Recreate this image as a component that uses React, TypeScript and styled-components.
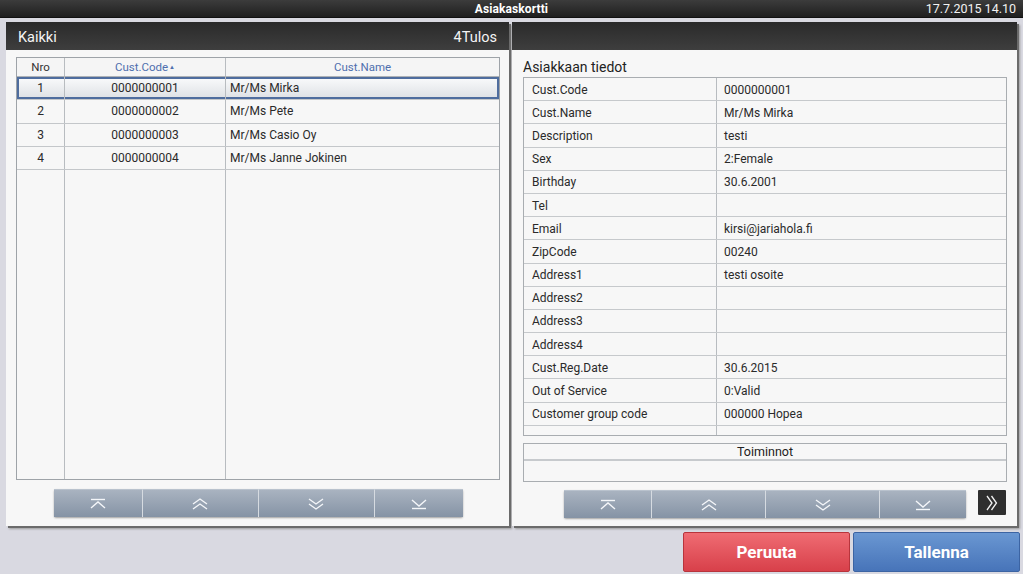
import styled, { createGlobalStyle } from 'styled-components';

const customers = [
  { nro: 1, code: '0000000001', name: 'Mr/Ms Mirka' },
  { nro: 2, code: '0000000002', name: 'Mr/Ms Pete' },
  { nro: 3, code: '0000000003', name: 'Mr/Ms Casio Oy' },
  { nro: 4, code: '0000000004', name: 'Mr/Ms Janne Jokinen' },
];

const details: [string, string][] = [
  ['Cust.Code', '0000000001'],
  ['Cust.Name', 'Mr/Ms Mirka'],
  ['Description', 'testi'],
  ['Sex', '2:Female'],
  ['Birthday', '30.6.2001'],
  ['Tel', ''],
  ['Email', 'kirsi@jariahola.fi'],
  ['ZipCode', '00240'],
  ['Address1', 'testi osoite'],
  ['Address2', ''],
  ['Address3', ''],
  ['Address4', ''],
  ['Cust.Reg.Date', '30.6.2015'],
  ['Out of Service', '0:Valid'],
  ['Customer group code', '000000 Hopea'],
];

function PagerIcon({ kind }: { kind: 'first' | 'up' | 'down' | 'last' }) {
  const stroke = '#f4f6f9';
  return (
    <svg width="18" height="14" viewBox="0 0 18 14" fill="none" stroke={stroke} strokeWidth="1.4">
      {kind === 'first' && (
        <>
          <path d="M2 2.5h14" />
          <path d="M2 11l7-6 7 6" />
        </>
      )}
      {kind === 'up' && (
        <>
          <path d="M2 7l7-5 7 5" />
          <path d="M2 12l7-5 7 5" />
        </>
      )}
      {kind === 'down' && (
        <>
          <path d="M2 2l7 5 7-5" />
          <path d="M2 7l7 5 7-5" />
        </>
      )}
      {kind === 'last' && (
        <>
          <path d="M2 3l7 6 7-6" />
          <path d="M2 11.5h14" />
        </>
      )}
    </svg>
  );
}

function Pager({ widths }: { widths: number[] }) {
  const kinds = ['first', 'up', 'down', 'last'] as const;
  return (
    <PagerGroup>
      {kinds.map((k, i) => (
        <PagerButton key={k} $w={widths[i]}>
          <PagerIcon kind={k} />
        </PagerButton>
      ))}
    </PagerGroup>
  );
}

export default function App() {
  return (
    <>
      <GlobalStyle />
      <Screen>
        <TopBar>
          <TopTitle>Asiakaskortti</TopTitle>
          <TopTime>17.7.2015 14.10</TopTime>
        </TopBar>
        <Main>
          <Panel $w={503}>
            <PanelHeader>
              <span>Kaikki</span>
              <span>4Tulos</span>
            </PanelHeader>
            <PanelBody>
              <ListTable>
                <ListHead>
                  <HeadCell $w={47}>Nro</HeadCell>
                  <HeadCell $w={161} $blue>
                    Cust.Code<SortMark>▲</SortMark>
                  </HeadCell>
                  <HeadCell $blue $grow>
                    Cust.Name
                  </HeadCell>
                </ListHead>
                {customers.map((c, i) => (
                  <ListRow key={c.nro} $selected={i === 0}>
                    <ListCell $w={47} $center>
                      {c.nro}
                    </ListCell>
                    <ListCell $w={161} $center>
                      {c.code}
                    </ListCell>
                    <ListCell $grow>{c.name}</ListCell>
                  </ListRow>
                ))}
                <ListFiller>
                  <FillerCol $w={47} />
                  <FillerCol $w={161} />
                  <FillerCol $grow />
                </ListFiller>
              </ListTable>
              <PagerRow>
                <Pager widths={[88, 116, 116, 89]} />
              </PagerRow>
            </PanelBody>
          </Panel>
          <Panel $w={505}>
            <PanelHeader />
            <PanelBody $right>
              <SectionTitle>Asiakkaan tiedot</SectionTitle>
              <DetailTable>
                {details.map(([k, v]) => (
                  <DetailRow key={k}>
                    <DetailKey>{k}</DetailKey>
                    <DetailValue>{v}</DetailValue>
                  </DetailRow>
                ))}
                <DetailRow $short>
                  <DetailKey />
                  <DetailValue />
                </DetailRow>
              </DetailTable>
              <ActionsBox>
                <ActionsHead>Toiminnot</ActionsHead>
              </ActionsBox>
              <PagerRow $right>
                <Pager widths={[87, 114, 114, 87]} />
                <NextButton>
                  <svg width="14" height="18" viewBox="0 0 14 18" fill="none" stroke="#f2f2f2" strokeWidth="1.3">
                    <path d="M2 2l5 7-5 7" />
                    <path d="M6.5 2l5 7-5 7" />
                  </svg>
                </NextButton>
              </PagerRow>
            </PanelBody>
          </Panel>
        </Main>
        <BottomBar>
          <ActionButton $tone="red">Peruuta</ActionButton>
          <ActionButton $tone="blue">Tallenna</ActionButton>
        </BottomBar>
      </Screen>
    </>
  );
}

const GlobalStyle = createGlobalStyle`
  html, body {
    margin: 0;
    padding: 0;
    background: #d9d9e1;
  }
  * {
    box-sizing: border-box;
  }
  body {
    font-family: Roboto, "Noto Sans", "Liberation Sans", sans-serif;
    color: #222;
  }
`;

const Screen = styled.div`
  width: 1023px;
  height: 574px;
  display: flex;
  flex-direction: column;
  background: #d9d9e1;
  overflow: hidden;
`;

const TopBar = styled.div`
  position: relative;
  height: 18px;
  flex-shrink: 0;
  display: flex;
  align-items: center;
  justify-content: center;
  background: linear-gradient(#3c3c3c, #1f1f1f);
  border-bottom: 1px solid #111;
  color: #fff;
  font-size: 12px;
`;

const TopTitle = styled.span`
  font-weight: 700;
  letter-spacing: 0.1px;
`;

const TopTime = styled.span`
  position: absolute;
  right: 7px;
  top: 1px;
  font-size: 12.5px;
  color: #f2f2f2;
`;

const Main = styled.div`
  display: flex;
  gap: 3px;
  padding: 4px 0 0 6px;
  height: 508px;
  flex-shrink: 0;
`;

const Panel = styled.div<{ $w: number }>`
  width: ${(p) => p.$w}px;
  height: 504px;
  display: flex;
  flex-direction: column;
  background: #f7f7f7;
  box-shadow: 2px 2px 0 #6b6b6b, 3px 3px 2px #9a9a9a;
`;

const PanelHeader = styled.div`
  height: 28px;
  flex-shrink: 0;
  display: flex;
  align-items: center;
  justify-content: space-between;
  padding: 2px 12px 0 12px;
  background: linear-gradient(#2a2a2a, #3e3e3e);
  color: #f4f4f4;
  font-size: 14.5px;
`;

const PanelBody = styled.div<{ $right?: boolean }>`
  flex: 1;
  display: flex;
  flex-direction: column;
  padding: ${(p) => (p.$right ? '8px 10px 0 11px' : '7px 9px 0 10px')};
`;

const ListTable = styled.div`
  height: 423px;
  display: flex;
  flex-direction: column;
  border: 1px solid #9ea3a8;
  background: #f7f7f7;
`;

const ListHead = styled.div`
  height: 19px;
  flex-shrink: 0;
  display: flex;
  border-bottom: 1px solid #aeb2b6;
  background: #f5f5f5;
`;

const HeadCell = styled.div<{ $w?: number; $blue?: boolean; $grow?: boolean }>`
  width: ${(p) => (p.$w ? `${p.$w}px` : 'auto')};
  flex: ${(p) => (p.$grow ? 1 : 'none')};
  display: flex;
  align-items: center;
  justify-content: center;
  font-size: 11.5px;
  color: ${(p) => (p.$blue ? '#4f6fae' : '#333')};
  & + & {
    border-left: 1px solid #b8bcc0;
  }
`;

const SortMark = styled.span`
  font-size: 6px;
  margin-left: 1px;
  margin-top: -2px;
`;

const ListRow = styled.div<{ $selected?: boolean }>`
  height: 23.3px;
  flex-shrink: 0;
  display: flex;
  border-bottom: 1px solid #c4c7ca;
  background: ${(p) => (p.$selected ? 'linear-gradient(#fafbfc, #dde0e4)' : '#f7f7f7')};
  box-shadow: ${(p) => (p.$selected ? 'inset 0 0 0 2px #4f6d9e' : 'none')};
`;

const ListCell = styled.div<{ $w?: number; $grow?: boolean; $center?: boolean }>`
  width: ${(p) => (p.$w ? `${p.$w}px` : 'auto')};
  flex: ${(p) => (p.$grow ? 1 : 'none')};
  display: flex;
  align-items: center;
  justify-content: ${(p) => (p.$center ? 'center' : 'flex-start')};
  padding-left: ${(p) => (p.$center ? 0 : 4)}px;
  font-size: 12px;
  color: #2a2a2a;
  & + & {
    border-left: 1px solid #b8bcc0;
  }
`;

const ListFiller = styled.div`
  flex: 1;
  display: flex;
`;

const FillerCol = styled.div<{ $w?: number; $grow?: boolean }>`
  width: ${(p) => (p.$w ? `${p.$w}px` : 'auto')};
  flex: ${(p) => (p.$grow ? 1 : 'none')};
  & + & {
    border-left: 1px solid #b8bcc0;
  }
`;

const PagerRow = styled.div<{ $right?: boolean }>`
  display: flex;
  align-items: flex-start;
  justify-content: ${(p) => (p.$right ? 'flex-end' : 'center')};
  gap: 12px;
  margin-top: ${(p) => (p.$right ? 8 : 9)}px;
  padding-right: ${(p) => (p.$right ? 1 : 0)}px;
`;

const PagerGroup = styled.div`
  display: flex;
  box-shadow: 0 1px 2px rgba(0, 0, 0, 0.35);
  border-radius: 2px;
`;

const PagerButton = styled.div<{ $w: number }>`
  width: ${(p) => p.$w}px;
  height: 28px;
  display: flex;
  align-items: center;
  justify-content: center;
  background: linear-gradient(#a9b3c0, #8593a5);
  border-top: 1px solid #b9c2cd;
  & + & {
    border-left: 1px solid #d6dbe1;
  }
`;

const NextButton = styled.div`
  width: 28px;
  height: 25px;
  display: flex;
  align-items: center;
  justify-content: center;
  background: #2f2f2f;
  border-radius: 1px;
`;

const SectionTitle = styled.div`
  height: 17px;
  display: flex;
  align-items: flex-end;
  font-size: 14px;
  color: #222;
  margin-bottom: 2px;
`;

const DetailTable = styled.div`
  height: 359px;
  flex-shrink: 0;
  display: flex;
  flex-direction: column;
  border: 1px solid #a9adb1;
  background: #f7f7f7;
  overflow: hidden;
`;

const DetailRow = styled.div<{ $short?: boolean }>`
  height: ${(p) => (p.$short ? 10 : 23.2)}px;
  flex-shrink: 0;
  display: flex;
  border-bottom: ${(p) => (p.$short ? 'none' : '1px solid #c6c9cc')};
`;

const DetailKey = styled.div`
  width: 193px;
  display: flex;
  align-items: center;
  padding-left: 8px;
  padding-top: 1px;
  font-size: 12px;
  color: #2a2a2a;
  border-right: 1px solid #b8bcc0;
`;

const DetailValue = styled.div`
  flex: 1;
  display: flex;
  align-items: center;
  padding-left: 7px;
  padding-top: 1px;
  font-size: 12px;
  color: #2a2a2a;
`;

const ActionsBox = styled.div`
  height: 39px;
  flex-shrink: 0;
  margin-top: 7px;
  border: 1px solid #a9adb1;
  background: #f7f7f7;
`;

const ActionsHead = styled.div`
  height: 17px;
  display: flex;
  align-items: center;
  justify-content: center;
  font-size: 12.5px;
  color: #222;
  border-bottom: 2px solid #c7cacd;
`;

const BottomBar = styled.div`
  display: flex;
  justify-content: flex-end;
  gap: 3px;
  padding: 6px 3px 0 0;
`;

const ActionButton = styled.div<{ $tone: 'red' | 'blue' }>`
  width: 167px;
  height: 40px;
  display: flex;
  align-items: center;
  justify-content: center;
  font-size: 17px;
  font-weight: 700;
  color: #fff;
  border-radius: 2px;
  background: ${(p) =>
    p.$tone === 'red'
      ? 'linear-gradient(#ef6c73, #d8404a)'
      : 'linear-gradient(#6a97d2, #4774b9)'};
  border: 1px solid ${(p) => (p.$tone === 'red' ? '#b8343c' : '#3c64a3')};
`;
